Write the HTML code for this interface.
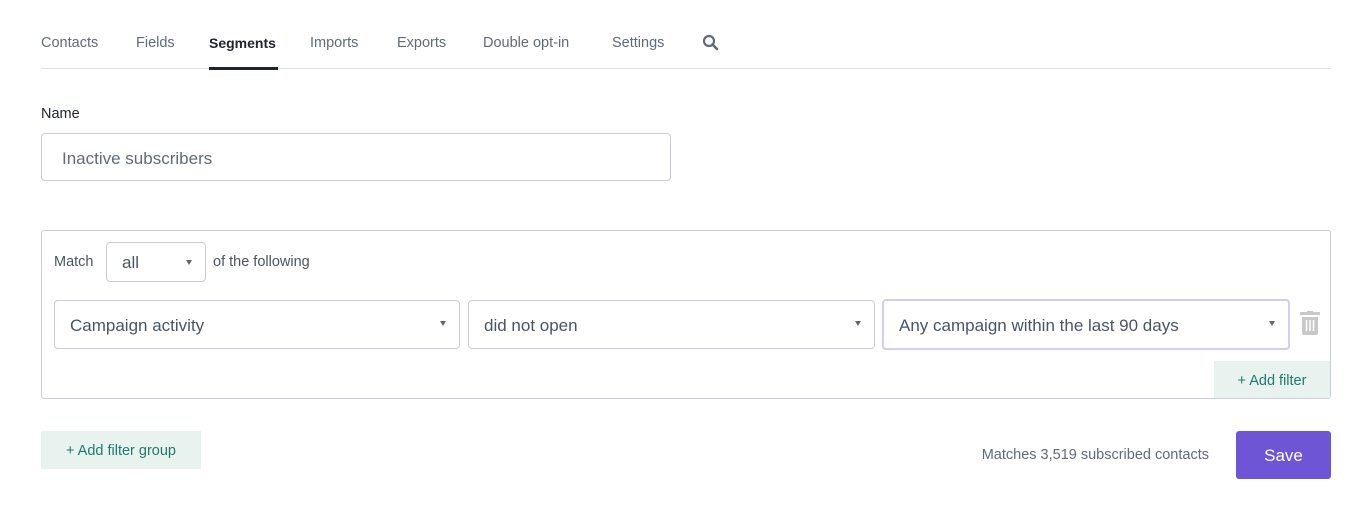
<!DOCTYPE html>
<html><head><style>
body{margin:0;width:1372px;height:532px;background:#fff;font-family:"Liberation Sans",sans-serif;position:relative;overflow:hidden}
.a{position:absolute;white-space:nowrap}
.nav{top:35px;font-size:14.5px;color:#5f6b7a}
.box{position:absolute;border:1px solid #c9ced6;border-radius:4px;background:#fff;box-sizing:border-box}
.sel{font-size:17px;color:#4a5563;padding-left:15px;line-height:50px}
.car{position:absolute;right:13px;top:20px;width:0;height:0;border-left:3.5px solid transparent;border-right:3.5px solid transparent;border-top:5px solid #666}
</style></head><body>
<div class="a nav" style="left:41px">Contacts</div>
<div class="a nav" style="left:136px">Fields</div>
<div class="a nav" style="left:209px;color:#1b2533;font-weight:bold;font-size:14px">Segments</div>
<div class="a nav" style="left:310px">Imports</div>
<div class="a nav" style="left:397px">Exports</div>
<div class="a nav" style="left:483px">Double opt-in</div>
<div class="a nav" style="left:612px">Settings</div>
<svg class="a" style="left:702px;top:34px" width="17" height="17" viewBox="0 0 17 17"><circle cx="7" cy="7" r="5" fill="none" stroke="#5f6b7a" stroke-width="2.2"/><path d="M10.5 10.5L15 15" stroke="#5f6b7a" stroke-width="2.6" stroke-linecap="round"/></svg>
<div class="a" style="left:41px;top:68px;width:1290px;height:1px;background:#dcdfe4"></div>
<div class="a" style="left:209px;top:67px;width:69px;height:3px;background:#1b2533"></div>

<div class="a" style="left:41px;top:106px;font-size:14.5px;color:#1b2533">Name</div>
<div class="box sel" style="left:41px;top:133px;width:630px;height:48px;padding-left:20px;color:#5f6b7a;line-height:49px">Inactive subscribers</div>

<div class="box" style="left:41px;top:230px;width:1290px;height:169px;border-radius:3px"></div>
<div class="a" style="left:54px;top:254px;font-size:14.5px;color:#4a5563">Match</div>
<div class="box" style="left:106px;top:242px;width:100px;height:40px;font-size:17px;color:#4a5563;padding-left:15px;line-height:40px">all<div class="car" style="top:17px"></div></div>
<div class="a" style="left:213px;top:254px;font-size:14.5px;color:#4a5563">of the following</div>

<div class="box sel" style="left:54px;top:300px;width:406px;height:49px">Campaign activity<div class="car"></div></div>
<div class="box sel" style="left:468px;top:300px;width:407px;height:49px">did not open<div class="car"></div></div>
<div class="box sel" style="left:882px;top:299px;width:408px;height:51px;border:2px solid #d3ccf5;line-height:50px">Any campaign within the last 90 days<div class="car"></div></div>
<svg class="a" style="left:1299px;top:311px" width="22" height="24" viewBox="0 0 22 24"><rect x="1" y="1" width="20" height="3" fill="#c8c8c8"/><rect x="8" y="0" width="6" height="2" fill="#c8c8c8"/><path d="M3 6h16v16a2 2 0 0 1-2 2H5a2 2 0 0 1-2-2z" fill="#c8c8c8"/><path d="M7.5 9v11M11 9v11M14.5 9v11" stroke="#fff" stroke-width="1.5"/></svg>
<div class="a" style="left:1214px;top:361px;width:116px;height:37px;background:#e8f2ef;color:#1f7a6c;font-size:14.5px;text-align:center;line-height:40px">+ Add filter</div>

<div class="a" style="left:41px;top:431px;width:160px;height:38px;background:#e8f2ef;color:#1f7a6c;font-size:14.5px;text-align:center;line-height:40px">+ Add filter group</div>
<div class="a" style="left:962px;top:447px;font-size:14.5px;color:#5f6b7a;width:247px;text-align:right">Matches 3,519 subscribed contacts</div>
<div class="a" style="left:1236px;top:431px;width:95px;height:48px;background:#6e55d6;border-radius:3px;color:#fff;font-size:17px;text-align:center;line-height:50px">Save</div>
</body></html>
